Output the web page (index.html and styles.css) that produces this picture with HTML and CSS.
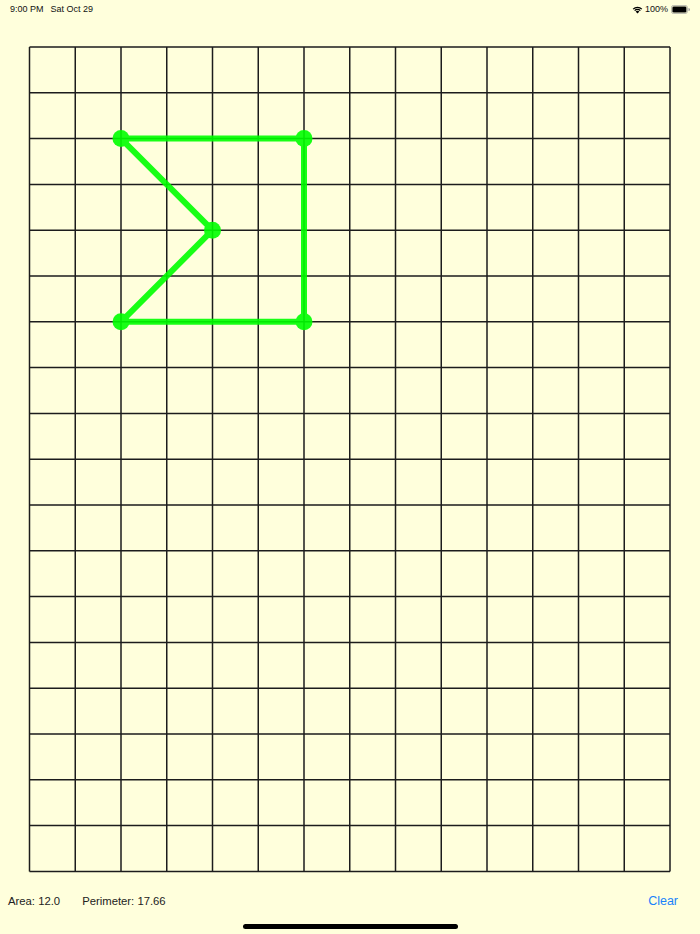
FILE: index.html
```html
<!DOCTYPE html>
<html>
<head>
<meta charset="utf-8">
<link rel="stylesheet" href="styles.css">
</head>
<body>
<div class="status">
  <div class="status-left"><span>9:00 PM</span><span class="date">Sat Oct 29</span></div>
  <div class="status-right">
    <svg class="wifi" width="11" height="9" viewBox="0 0 22 16">
      <path d="M11 16 L7.2 12.2 A5.4 5.4 0 0 1 14.8 12.2 Z" fill="#000"/>
      <path d="M4.4 9.4 A9.4 9.4 0 0 1 17.6 9.4 L15.8 11.2 A6.9 6.9 0 0 0 6.2 11.2 Z" fill="#000"/>
      <path d="M1.4 6.4 A13.6 13.6 0 0 1 20.6 6.4 L18.8 8.2 A11.1 11.1 0 0 0 3.2 8.2 Z" fill="#000"/>
    </svg>
    <span class="pct">100%</span>
    <svg class="battery" width="19" height="9" viewBox="0 0 38 18">
      <rect x="0.8" y="0.8" width="32" height="16.4" rx="4.5" fill="none" stroke="#999" stroke-width="1.4"/>
      <rect x="2.8" y="2.8" width="28" height="12.4" rx="2.8" fill="#000"/>
      <path d="M35 6 A3 3 0 0 1 35 12 Z" fill="#999"/>
    </svg>
  </div>
</div>
<div class="board">
  <svg class="grid" width="658" height="842" viewBox="21 39 658 842">
    <g stroke="#1c1c1c" stroke-width="1.5" fill="none">
      <path d="M29.5 47V871.4M75.25 47V871.4M121 47V871.4M166.75 47V871.4M212.5 47V871.4M258.25 47V871.4M304 47V871.4M349.75 47V871.4M395.5 47V871.4M441.25 47V871.4M487 47V871.4M532.75 47V871.4M578.5 47V871.4M624.25 47V871.4M670 47V871.4"/>
      <path d="M29.5 47H670M29.5 92.8H670M29.5 138.6H670M29.5 184.4H670M29.5 230.2H670M29.5 276H670M29.5 321.8H670M29.5 367.6H670M29.5 413.4H670M29.5 459.2H670M29.5 505H670M29.5 550.8H670M29.5 596.6H670M29.5 642.4H670M29.5 688.2H670M29.5 734H670M29.5 779.8H670M29.5 825.6H670M29.5 871.4H670"/>
    </g>
    <g class="shape" opacity="0.9">
      <polygon points="121,138.6 304,138.6 304,321.8 121,321.8 212.5,230.2" fill="none" stroke="#00ff00" stroke-width="6" stroke-linejoin="round"/>
      <g fill="#00ff00">
        <circle cx="121" cy="138.6" r="8.5"/>
        <circle cx="304" cy="138.6" r="8.5"/>
        <circle cx="304" cy="321.8" r="8.5"/>
        <circle cx="121" cy="321.8" r="8.5"/>
        <circle cx="212.5" cy="230.2" r="8.5"/>
      </g>
    </g>
  </svg>
</div>
<div class="footer">
  <div class="stats"><span>Area: 12.0</span><span class="perim">Perimeter: 17.66</span></div>
  <span class="clear">Clear</span>
</div>
<div class="home-row"><div class="home"></div></div>
</body>
</html>
```
FILE: styles.css
```css
html, body {
  margin: 0;
  padding: 0;
}
body {
  width: 700px;
  height: 934px;
  background: #ffffdc;
  font-family: "Liberation Sans", Arial, sans-serif;
  color: #111;
  overflow: hidden;
}
.status {
  height: 18px;
  display: flex;
  justify-content: space-between;
  align-items: center;
  padding: 0 10px 0 10px;
  font-size: 9px;
  font-weight: 500;
}
.status-left .date {
  margin-left: 7px;
}
.status-right {
  display: flex;
  align-items: center;
  gap: 2px;
}
.pct {
  margin-right: 1px;
}
.board {
  margin-top: 21px;
  padding-left: 21px;
  height: 842px;
}
.grid {
  display: block;
}
.footer {
  height: 40px;
  display: flex;
  justify-content: space-between;
  align-items: center;
  padding: 0 22px 0 8px;
  font-size: 11.3px;
  color: #222;
}
.perim {
  margin-left: 22px;
}
.clear {
  color: #1a82fb;
  font-size: 12.5px;
}
.home-row {
  display: flex;
  justify-content: center;
  padding-top: 3px;
}
.home {
  width: 215px;
  height: 5px;
  border-radius: 3px;
  background: #000;
}
```
